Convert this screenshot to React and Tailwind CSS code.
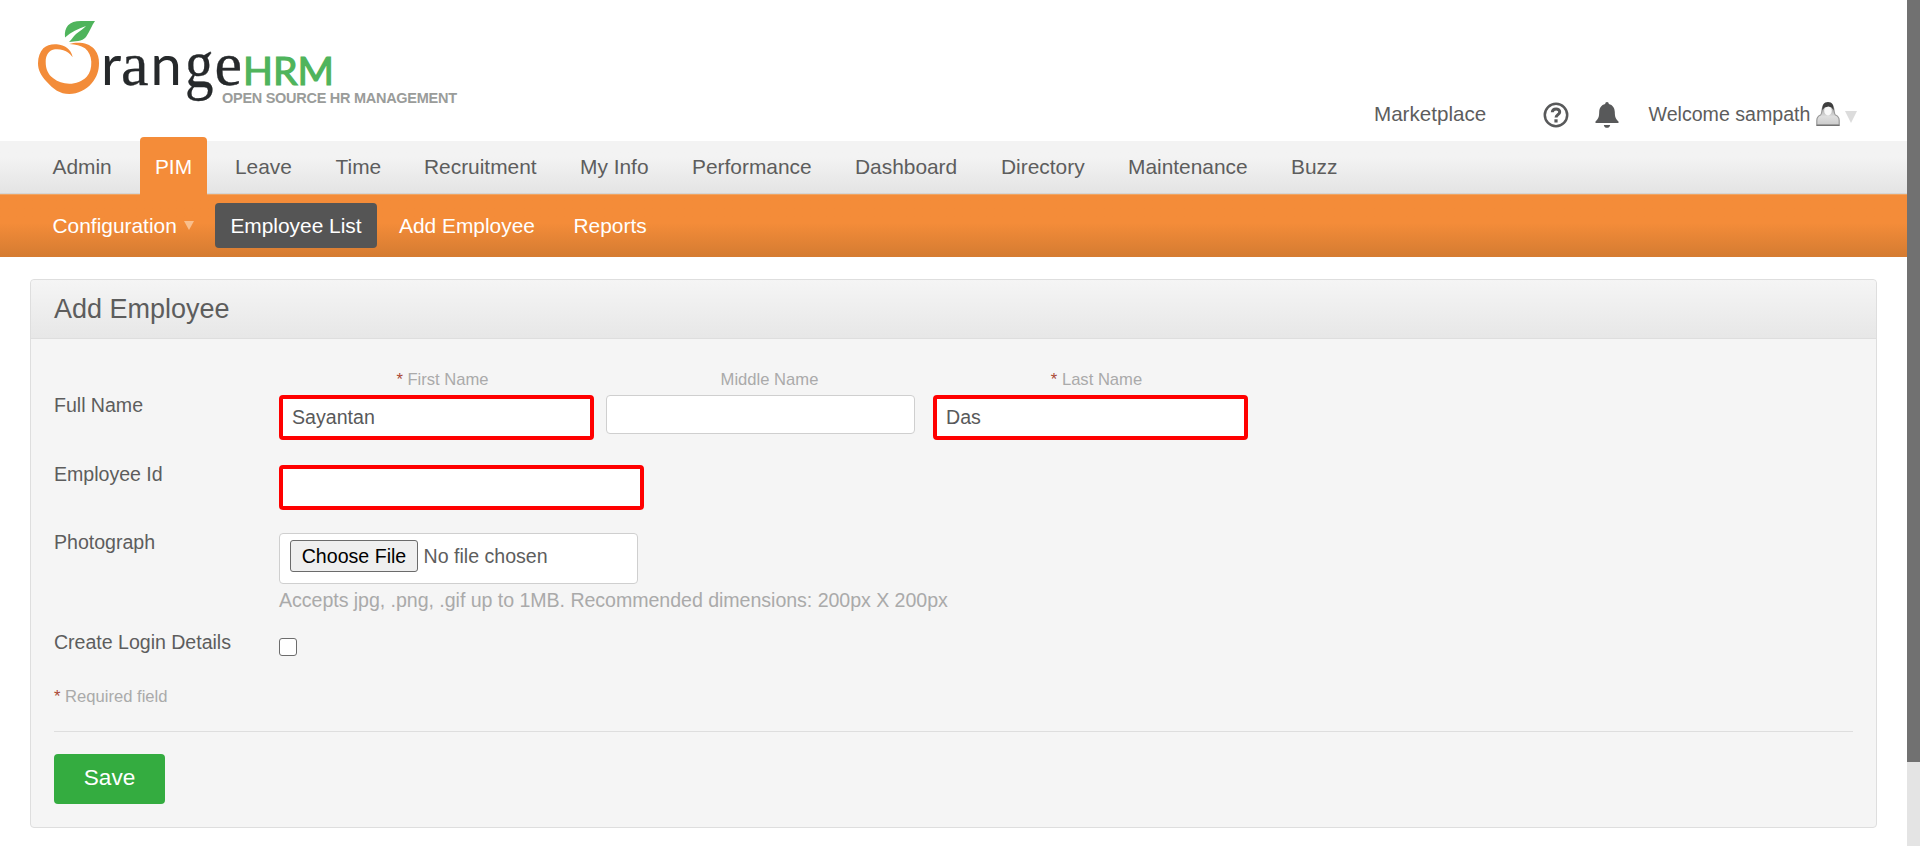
import React from "react";

const NAV = [
  { label: "Admin", w: "w-[87.5px]" },
  { label: "PIM", w: "w-[67px]", active: true },
  { label: "Leave", w: "w-[100.5px]" },
  { label: "Time", w: "w-[88.5px]" },
  { label: "Recruitment", w: "w-[156px]" },
  { label: "My Info", w: "w-[112px]" },
  { label: "Performance", w: "w-[163px]" },
  { label: "Dashboard", w: "w-[146px]" },
  { label: "Directory", w: "w-[127px]" },
  { label: "Maintenance", w: "w-[163px]" },
  { label: "Buzz", w: "w-[80px]" },
];

function Logo() {
  return (
    <svg width="430" height="96" viewBox="0 0 430 96" className="mt-[15px] ml-[36px] shrink-0">
      <path
        d="M29 22.500 C28 12 33 6 45 6 H59 C56 10 54 16 50 22 C46 27 39 26 33 27 C36 24 37 22 40 19 C44 16 48 13 50 11 C42 14 35 17 29 22.500 Z"
        fill="#4fb45c"
      />
      <path
        d="M33.300 29 C37 27.800 40 27.500 44 27.700 C51 28.300 56 31 59 35 C62 39 63 43 63 48.300 C63 56 61 62 55.700 68.300 C50 75 42 79 33.300 79 C24 79 17 74 10.700 66.700 C5 61 2 55 2 48.300 C2 42 4 37 7.300 33.300 C11 30 15 29 20.700 29.300 C29 30 35 34 36.700 42.300 C34 38.500 31 36.500 27.300 35.300 C24.500 34.300 22 34 19 34.300 C13 35 9.700 40 9.700 46.700 C9.700 54 12 59.500 17.300 63.300 C22 67 27 68.700 33.300 68.700 C40 68.700 46 66.500 50.700 61.700 C54 58 55.500 53 55.300 46.700 C55 41 53 37 49 33.300 C44.500 30.500 40 29.500 33.300 29 Z"
        fill="#f38c39"
      />
      <g fill="#26292b">
        <text x="65" y="70" fontFamily="Lato, sans-serif" fontSize="56">r</text>
        <text x="85" y="70" fontFamily="'Liberation Serif', serif" fontSize="62" stroke="#26292b" strokeWidth=".3">a</text>
        <text x="114.500" y="70" fontFamily="Lato, sans-serif" fontSize="56">n</text>
        <text transform="translate(149 71.500) scale(.95 1.12)" fontFamily="'Liberation Serif', serif" fontSize="60" stroke="#26292b" strokeWidth=".3">g</text>
        <text x="178.500" y="70" fontFamily="'Liberation Serif', serif" fontSize="62" stroke="#26292b" strokeWidth=".3">e</text>
      </g>
      <text x="207" y="69.500" fontFamily="Lato, sans-serif" fontSize="39" fontWeight="400" fill="#4fb45c" stroke="#4fb45c" strokeWidth="1.200" textLength="91" lengthAdjust="spacingAndGlyphs">HRM</text>
      <text x="186" y="87.500" fontFamily="'Liberation Sans', Arial, sans-serif" fontSize="14.500" fontWeight="700" fill="#9a9c9a" textLength="235" lengthAdjust="spacing">OPEN SOURCE HR MANAGEMENT</text>
    </svg>
  );
}

function HelpIcon() {
  return (
    <svg width="26" height="26" viewBox="0 0 26 26" fill="none" stroke="#58595a">
      <circle cx="13" cy="13" r="11.200" strokeWidth="2.500" />
      <path d="M9.300 10.300 C9.500 5.800 16.800 5.900 16.700 10 C16.700 12.600 13.100 12.700 13 15.500" strokeWidth="3" />
      <path d="M13 17.300 V20.500" strokeWidth="3.200" />
    </svg>
  );
}

function BellIcon() {
  return (
    <svg width="24" height="26" viewBox="0 0 24 26" fill="#58595a">
      <path d="M12 0 C13.100 0 13.800 .8 13.800 1.900 C17.800 2.800 19.700 6 19.800 10 C19.900 15 20.500 16.800 23.500 19.500 V21 H.5 V19.500 C3.500 16.800 4.100 15 4.200 10 C4.300 6 6.200 2.800 10.200 1.900 C10.200 .8 10.900 0 12 0 Z" />
      <path d="M8.800 23 H15.200 C14.600 26.800 9.400 26.800 8.800 23 Z" />
    </svg>
  );
}

function Avatar() {
  return (
    <svg width="24" height="24" viewBox="0 0 24 24">
      <defs>
        <linearGradient id="coat" x1="0" y1="0" x2="0" y2="1">
          <stop offset="0" stopColor="#a8a8a8" />
          <stop offset=".5" stopColor="#dedede" />
          <stop offset="1" stopColor="#cbcbcb" />
        </linearGradient>
      </defs>
      <path d="M.8 23.200 V18.500 C.8 15.500 2.200 14 4.500 13 C6 12 5.500 9 6.500 6 H17.500 C18.500 9 18 12 19.500 13 C21.800 14 23.200 15.500 23.200 18.500 V23.200 Z" fill="url(#coat)" stroke="#9a9a9a" strokeWidth="1.200" />
      <path d="M.5 23.300 H23.500" stroke="#6c6c6c" strokeWidth="1.200" />
      <ellipse cx="12" cy="8.500" rx="3.800" ry="5" fill="#f8f8f8" />
      <path d="M6.500 8.500 C5.500 3 8 0 12 0 C16 0 18.500 3 17.500 8.500 C16.500 5.500 14.500 5 12.500 4.500 C10 5 7.500 5.500 6.500 8.500 Z" fill="#3e3e3e" />
    </svg>
  );
}

function Label({ children }) {
  return <label className="w-[225px] shrink-0 text-[19.6px] leading-6 tracking-[-0.03px]">{children}</label>;
}

function NameField({ label, required, value, className, labelClass = "pl-3", inputClass }) {
  return (
    <div className={`flex flex-col ${className}`}>
      <div className={`flex h-[21px] items-end justify-center text-[16.6px] leading-5 whitespace-pre text-[#aaaaaa] ${labelClass}`}>
        {required && <span className="text-[#aa4935]">{"* "}</span>}
        {label}
      </div>
      <input
        type="text"
        defaultValue={value}
        className={`mt-[5px] rounded bg-white text-[19.6px] text-[#58595a] outline-none ${inputClass}`}
      />
    </div>
  );
}

export default function App() {
  return (
    <div className="flex h-[846px] w-full overflow-hidden bg-white font-['Liberation_Sans',Arial,sans-serif] text-[#5d5d5d]">
      <div className="flex w-[1907px] shrink-0 flex-col">
        <header className="flex h-[141px] shrink-0 items-start">
          <Logo />
          <div className="ml-auto flex h-[26px] w-[533px] items-center self-end mb-[13px]">
            <a className="-mt-[2px] w-[169px] text-[20.6px] leading-6">Marketplace</a>
            <HelpIcon />
            <span className="ml-[26px]"><BellIcon /></span>
            <span className="-mt-[2px] ml-[29.5px] text-[19.6px] leading-6 whitespace-nowrap">Welcome sampath</span>
            <span className="-mt-[2px] ml-[6px]"><Avatar /></span>
            <svg width="12" height="12" viewBox="0 0 12 12" className="mt-1 ml-[5px]"><path d="M0 0 H12 L6 12 Z" fill="#dcdcdc" /></svg>
          </div>
        </header>

        <nav className="flex h-[53px] shrink-0 items-end border-b border-[#d5d5d5] bg-linear-to-b from-[#f3f3f3] from-30% to-[#e4e4e4] pl-[52.5px] text-[20.9px] leading-[26px]">
          {NAV.map((n) =>
            n.active ? (
              <a key={n.label} className="relative z-10 -mb-[3px] mr-[28px] flex h-[59px] w-[67px] shrink-0 justify-center rounded-t bg-[#f48c39] pt-[17px] text-white">
                {n.label}
              </a>
            ) : (
              <a key={n.label} className={`h-[39px] shrink-0 ${n.w}`}>{n.label}</a>
            )
          )}
        </nav>

        <nav className="flex h-[63px] shrink-0 items-center border-t border-[#f0a563] bg-linear-to-b from-[#f48c39] from-45% to-[#d67c32] to-97% pl-[52.5px] text-[20.9px] text-white">
          <a className="w-[131px]">Configuration</a>
          <svg width="10" height="9" viewBox="0 0 10 9" className="-mt-[2px]"><path d="M0 0 H10 L5 9 Z" fill="#f9bf8d" /></svg>
          <a className="-mt-[2px] ml-[21.5px] flex h-[45px] w-[162px] items-center justify-center rounded bg-[#555555] pt-px">Employee List</a>
          <a className="ml-[22px] w-[174.5px]">Add Employee</a>
          <a>Reports</a>
        </nav>

        <main className="mt-[22px] ml-[30px] flex h-[549px] w-[1847px] shrink-0 flex-col rounded border border-[#dedede] bg-[#f5f5f5]">
          <div className="flex h-[59px] shrink-0 items-center rounded-t border-b border-[#dedede] bg-linear-to-b from-[#f5f5f5] to-[#e7e7e7] pl-[23px]">
            <h1 className="text-[27px] leading-8">Add Employee</h1>
          </div>

          <form className="flex flex-col pr-[23px] pl-[23px]">
            <div className="flex h-[126px] items-start pt-[30px]">
              <div className="flex pt-6"><Label>Full Name</Label></div>
              <div className="flex">
                <NameField label="First Name" required value="Sayantan" className="w-[315px]" inputClass="h-[45px] border-4 border-[#ff0000] px-[9px]" />
                <NameField label="Middle Name" className="ml-[12px] w-[309px]" labelClass="pl-[18px]" inputClass="h-[39px] border border-[#cfcfcf] px-3" />
                <NameField label="Last Name" required value="Das" className="ml-[18px] w-[315px]" inputClass="h-[45px] border-4 border-[#ff0000] px-[9px]" />
              </div>
            </div>

            <div className="flex h-[68px] items-start">
              <div className="-mt-[3px] flex"><Label>Employee Id</Label></div>
              <input type="text" className="h-[45px] w-[365px] rounded border-4 border-[#ff0000] bg-white px-[9px] text-[19.6px] outline-none" />
            </div>

            <div className="flex h-[105px] items-start">
              <div className="-mt-[3px] flex"><Label>Photograph</Label></div>
              <div className="flex flex-col">
                <div className="flex h-[51px] w-[359px] items-start rounded border border-[#cfcfcf] bg-white pt-[6px] pl-[10px] text-[19.6px]">
                  <button type="button" className="h-8 w-[128px] rounded-[3px] border border-[#6b6b6b] bg-[#efefef] leading-[30px] text-black">Choose File</button>
                  <span className="ml-[5.5px] leading-8">No file chosen</span>
                </div>
                <span className="mt-1 text-[19.6px] leading-6 tracking-[-0.045px] whitespace-nowrap text-[#aaaaaa]">
                  Accepts jpg, .png, .gif up to 1MB. Recommended dimensions: 200px X 200px
                </span>
              </div>
            </div>

            <div className="flex h-[48px] items-start">
              <div className="-mt-[8px] flex"><Label>Create Login Details</Label></div>
              <input type="checkbox" className="size-[18px] appearance-none rounded-[3px] border-[1.5px] border-[#6c6c6c] bg-white" />
            </div>

            <p className="h-[45px] pt-px text-[16.6px] leading-5 whitespace-pre text-[#aaaaaa]">
              <span className="text-[#aa4935]">*</span> Required field
            </p>
            <div className="border-t border-[#dedede] pt-[22px]">
              <button type="button" className="h-[50px] w-[111px] rounded bg-[#34ac40] pb-[2px] text-[22.6px] text-white">Save</button>
            </div>
          </form>
        </main>
      </div>
      <div className="flex-1 bg-[#e4e4e4]">
        <div className="h-[762px] bg-[#717171]" />
      </div>
    </div>
  );
}
